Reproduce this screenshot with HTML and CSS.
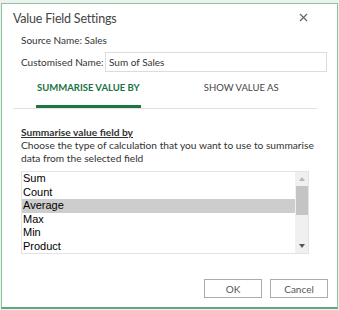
FILE: index.html
```html
<!DOCTYPE html>
<html lang="en">
<head>
  <meta charset="UTF-8">
  <title>Value Field Settings</title>
  <link rel="stylesheet" href="styles.css">
</head>
<body>

<div class="dialog">
  <div class="title-bar">
    <h1 class="title">Value Field Settings</h1>
    <span class="close-btn">
      <svg width="9" height="9" viewBox="0 0 9 9"><path d="M1 1 L8 8 M8 1 L1 8" stroke="#666" stroke-width="1.2" fill="none"/></svg>
    </span>
  </div>

  <div class="source-row">Source Name: Sales</div>

  <div class="name-row">
    <label for="customName">Customised Name:</label>
    <input type="text" id="customName" value="Sum of Sales">
  </div>

  <!-- Tabs -->
  <div class="tabs">
    <div class="tab active">SUMMARISE VALUE BY</div>
    <div class="tab">SHOW VALUE AS</div>
  </div>

  <div class="panel">
    <div class="panel-heading">Summarise value field by</div>
    <p class="panel-text">Choose the type of calculation that you want to use to summarise data from the selected field</p>

    <div class="listbox">
      <ul class="list-items">
        <li>Sum</li>
        <li>Count</li>
        <li class="selected">Average</li>
        <li>Max</li>
        <li>Min</li>
        <li>Product</li>
      </ul>
      <div class="scrollbar">
        <span class="arrow-up"></span>
        <span class="thumb"></span>
        <span class="arrow-down"></span>
      </div>
    </div>
  </div>

  <div class="buttons">
    <button class="btn">OK</button>
    <button class="btn">Cancel</button>
  </div>
</div>

</body>
</html>
```

FILE: styles.css
```css
* {
  margin: 0;
  padding: 0;
  box-sizing: border-box;
}

body {
  background: #eef1ef;
  font-family: Lato, "Open Sans", sans-serif;
  color: #333;
  padding: 3px 0 0 1px;
}

.dialog {
  width: 337px;
  height: 306px;
  background: white;
  border: 1px solid #86c7a0;
  border-bottom: 2px solid #5fa77c;
  display: flex;
  flex-direction: column;
}

.title-bar {
  display: flex;
  align-items: center;
  justify-content: space-between;
  padding: 5px 29px 0 11px;
  height: 25px;
}

.title {
  font-size: 12.5px;
  font-weight: normal;
  letter-spacing: -0.2px;
  color: #444;
  line-height: 20px;
  white-space: nowrap;
}

.close-btn {
  display: flex;
  margin-top: -4px;
}

.source-row {
  font-size: 10px;
  line-height: 14px;
  margin: 4px 0 0 19px;
  white-space: nowrap;
}

.name-row {
  display: flex;
  align-items: center;
  margin: 5px 0 0 19px;
  font-size: 10px;
  white-space: nowrap;
}

.name-row label {
  width: 84px;
}

.name-row input {
  width: 222px;
  height: 20px;
  border: 1px solid #dcdcdc;
  padding: 0 3px;
  font-family: Lato, "Open Sans", sans-serif;
  font-size: 10px;
  color: #333;
}

.tabs {
  display: flex;
  margin: 7px 20px 0 11px;
  padding-left: 23px;
  border-bottom: 1px solid #e1e1e1;
  white-space: nowrap;
}

.tab {
  font-size: 9.5px;
  color: #444;
  line-height: 14px;
  padding: 2px 0 13px;
}

.tab.active {
  color: #217346;
  font-weight: bold;
  border-bottom: 3px solid #217346;
  padding: 2px 1px 10px;
  margin-right: 63px;
}

.panel {
  padding: 17px 0 0 19px;
}

.panel-heading {
  font-size: 10.2px;
  font-weight: bold;
  text-decoration: underline;
  line-height: 13px;
}

.panel-text {
  font-size: 10.2px;
  line-height: 13px;
  width: 300px;
}

.listbox {
  display: flex;
  margin-top: 6px;
  width: 288px;
  height: 83px;
  border: 1px solid #e3e3e3;
}

.list-items {
  list-style: none;
  flex: 1;
  font-family: "Liberation Sans", Arial, sans-serif;
  font-size: 11px;
  color: #000;
}

.list-items li {
  height: 13.5px;
  line-height: 13.5px;
  padding-left: 1px;
}

.list-items li.selected {
  background: #cdcdcd;
}

.scrollbar {
  width: 13px;
  background: #f0f0f0;
  display: flex;
  flex-direction: column;
  align-items: center;
}

.arrow-up {
  width: 0;
  height: 0;
  margin-top: 5px;
  border-left: 3.5px solid transparent;
  border-right: 3.5px solid transparent;
  border-bottom: 4px solid #b8b8b8;
}

.thumb {
  width: 12px;
  height: 29px;
  margin-top: 5px;
  background: #c4c4c4;
}

.arrow-down {
  width: 0;
  height: 0;
  margin-top: auto;
  margin-bottom: 5px;
  border-left: 3.5px solid transparent;
  border-right: 3.5px solid transparent;
  border-top: 4px solid #555;
}

.buttons {
  display: flex;
  justify-content: flex-end;
  gap: 8px;
  margin-top: auto;
  padding: 0 9px 9px 0;
}

.btn {
  width: 58px;
  height: 19px;
  background: white;
  border: 1px solid #ababab;
  font-family: Lato, "Open Sans", sans-serif;
  font-size: 10px;
  color: #555;
}
```
